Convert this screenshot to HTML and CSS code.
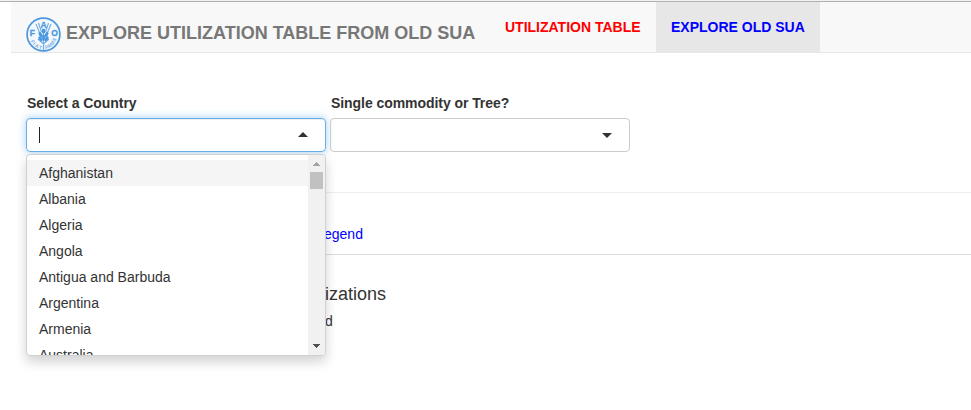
FILE: index.html
```html
<!DOCTYPE html>
<html lang="en">
<head>
<meta charset="utf-8">
<title>Explore old SUA</title>
<link rel="stylesheet" href="styles.css">
</head>
<body>
<header class="navbar">
  <div class="brand">
    <svg class="logo" viewBox="0 0 36 36" width="36" height="36">
      <circle cx="17.500" cy="17.500" r="16.400" fill="#f4f8fc" stroke="#4b98df" stroke-width="1.7"/>
      <g fill="none" stroke="#75afe6" stroke-width="1.2">
        <path d="M17.500 13v20M10 7l4.500 11M12.500 6l3 9M25 7l-4.500 11M22.500 6l-3 9M12 22l5.500 5 5.500-5"/>
      </g>
      <g fill="#4b98df">
        <ellipse cx="17.500" cy="14" rx="1.800" ry="2.600"/>
        <ellipse cx="14.500" cy="17.500" rx="1.600" ry="2.900" transform="rotate(-28 14.500 17.500)"/>
        <ellipse cx="20.500" cy="17.500" rx="1.600" ry="2.900" transform="rotate(28 20.500 17.500)"/>
        <ellipse cx="14.500" cy="21.800" rx="1.600" ry="2.900" transform="rotate(-35 14.500 21.800)"/>
        <ellipse cx="20.500" cy="21.800" rx="1.600" ry="2.900" transform="rotate(35 20.500 21.800)"/>
        <ellipse cx="17.500" cy="20.500" rx="1.500" ry="3"/>
      </g>
      <g class="logo-letters">
        <text x="17.500" y="10.500">A</text><text x="6.300" y="18.500">F</text><text x="28.500" y="18.500">O</text>
      </g>
      <g class="logo-motto">
        <text transform="translate(4.500 24) rotate(62)">F</text><text transform="translate(6.500 27.500) rotate(45)">I</text><text transform="translate(8.500 29.500) rotate(30)">A</text><text transform="translate(12.500 31.800) rotate(15)">T</text>
        <text transform="translate(19.500 32.200) rotate(-15)">P</text><text transform="translate(22.500 31.200) rotate(-28)">A</text><text transform="translate(25.500 29.300) rotate(-40)">N</text><text transform="translate(28 26.500) rotate(-53)">I</text><text transform="translate(29 25) rotate(-60)">S</text>
      </g>
    </svg>
    <span class="title">EXPLORE UTILIZATION TABLE FROM OLD SUA</span>
  </div>
  <nav class="tabs">
    <a class="tab tab-red">UTILIZATION TABLE</a>
    <a class="tab tab-active">EXPLORE OLD SUA</a>
  </nav>
</header>
<main>
  <section class="filters">
    <div class="field">
      <label>Select a Country</label>
      <div class="select focused"><span class="caret"></span><i class="arrow up"></i></div>
      <div class="menu">
        <ul class="options">
          <li class="active">Afghanistan</li>
          <li>Albania</li>
          <li>Algeria</li>
          <li>Angola</li>
          <li>Antigua and Barbuda</li>
          <li>Argentina</li>
          <li>Armenia</li>
          <li>Australia</li>
        </ul>
        <div class="scrollbar">
          <svg width="17" height="17"><path d="M5 11h7v-1h-1V9h-1V8H9V7H8v1H7v1H6v1H5z" fill="#a3a3a3"/></svg>
          <div class="thumb"></div>
          <svg class="down" width="17" height="17"><path d="M5 6h7v1h-1v1h-1v1H9v1H8V9H7V8H6V7H5z" fill="#505050"/></svg>
        </div>
      </div>
    </div>
    <div class="field">
      <label>Single commodity or Tree?</label>
      <div class="select"><i class="arrow"></i></div>
    </div>
  </section>
  <hr>
  <div class="subtabs"><a>egend</a></div>
  <section class="results">
    <h4>izations</h4>
    <p>d</p>
  </section>
</main>
</body>
</html>
```
FILE: styles.css
```css
* { box-sizing: border-box; }
body {
  margin: 0;
  height: 410px;
  overflow: hidden;
  background: #fff;
  border-top: 1px solid #f2f2f2;
  color: #333;
  font: 14px/20px "Liberation Sans", Arial, sans-serif;
}
body::before {
  content: "";
  display: block;
  height: 1px;
  background: #b0b0b0;
}
.navbar {
  display: flex;
  height: 51px;
  margin-left: 11px;
  background: #f8f8f8;
  border-bottom: 1px solid #e7e7e7;
}
.brand {
  display: flex;
  width: 479px;
  padding: 15px 0 0 15px;
}
.logo { flex: none; }
.logo-letters {
  fill: #4b98df;
  stroke: #4b98df;
  stroke-width: .3;
  font: bold 8.5px "Liberation Sans", sans-serif;
  text-anchor: middle;
}
.logo-motto {
  fill: #75afe6;
  font: bold 5px "Liberation Sans", sans-serif;
}
.title {
  margin: 6px 0 0 4px;
  color: #777;
  font-size: 18px;
  font-weight: bold;
  white-space: nowrap;
}
.tabs { display: flex; }
.tab {
  height: 50px;
  padding: 15px;
  font-weight: bold;
  white-space: nowrap;
}
.tab-red { width: 166px; color: #f00; }
.tab-active { width: 164px; background: #e7e7e7; color: #00f; }
main { padding: 40px 0 0 26px; }
.filters { display: flex; gap: 4px; height: 99px; }
.field { position: relative; width: 300px; }
label {
  display: block;
  margin: 0 0 5px 1px;
  font-weight: bold;
  letter-spacing: -.06px;
}
.select {
  display: flex;
  align-items: center;
  justify-content: space-between;
  height: 34px;
  padding: 0 17px 0 12px;
  border: 1px solid #ccc;
  border-radius: 4px;
}
.focused {
  border-color: #66afe9;
  box-shadow: inset 0 1px 1px rgba(0, 0, 0, .075), 0 0 8px rgba(102, 175, 233, .6);
}
.caret { width: 1px; height: 16px; background: #222; }
.arrow {
  margin-left: auto;
  border: solid transparent;
  border-width: 5px 5px 0;
  border-top-color: #333;
}
.up {
  margin-top: -2px;
  border-width: 0 5px 5px;
  border-bottom-color: #333;
}
.menu {
  position: absolute;
  z-index: 2;
  top: 61px;
  left: 0;
  display: flex;
  width: 300px;
  height: 202px;
  overflow: hidden;
  background: #fff;
  border: 1px solid #d0d0d0;
  border-radius: 4px;
  box-shadow: 0 6px 12px rgba(0, 0, 0, .175);
}
.options {
  flex: 1;
  margin: 0;
  padding: 5px 0;
  list-style: none;
}
.options li { height: 26px; padding: 3px 12px; }
.options .active { background: #f5f5f5; }
.scrollbar {
  display: flex;
  flex-direction: column;
  width: 17px;
  background: #f1f1f1;
}
.thumb { height: 17px; margin: 0 2px; background: #c1c1c1; }
.down { margin-top: auto; }
hr { margin: 0; border: 0; border-top: 1px solid #eee; }
.subtabs {
  height: 62px;
  padding: 31px 0 0 298px;
  border-bottom: 1px solid #ddd;
  color: #00f;
}
.results { padding: 29px 0 0 299px; }
h4 { margin: 0; font-size: 18px; line-height: 20px; font-weight: normal; }
p { margin: 7px 0 0; }
```
